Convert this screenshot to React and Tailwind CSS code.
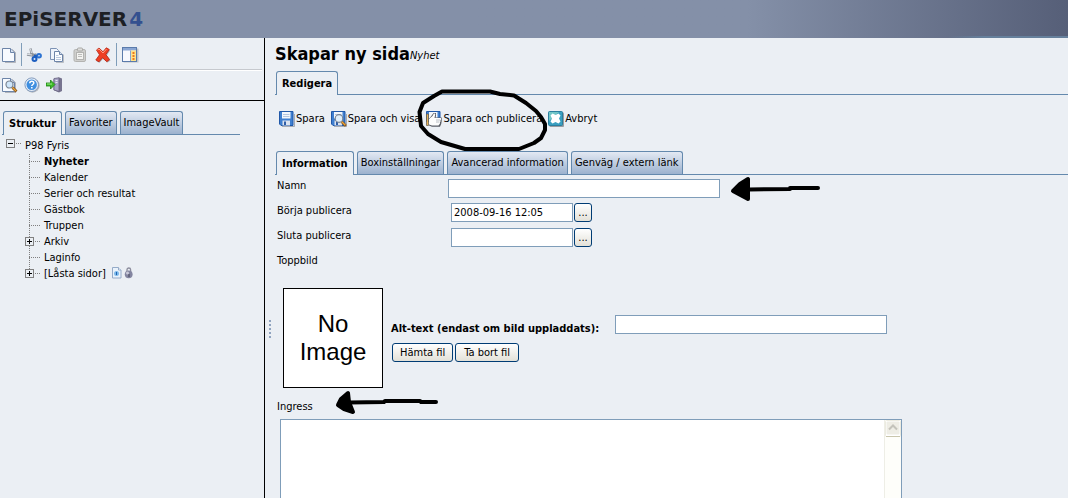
import React from "react";

const Svg = ({ children, w = 16, h = 16, className = "" }) => (
  <svg width={w} height={h} viewBox={`0 0 ${w} ${h}`} aria-hidden="true" className={`block shrink-0 ${className}`}>
    {children}
  </svg>
);

const Page = ({ x = 0, y = 0 }) => (
  <g transform={`translate(${x} ${y})`}>
    <path d="M3 2.5h8.5l3 3v10H4" fill="none" stroke="#9a9da4" strokeOpacity=".7" />
    <path d="M1.5 1.5h8l4 4v9h-12z" fill="#f7faff" stroke="#6c84a8" />
    <path d="M9.5 1.5v4h4" fill="#d5e0f0" stroke="#6c84a8" />
  </g>
);

const NewIcon = () => <Svg><Page /></Svg>;

const CutIcon = () => (
  <Svg>
    <path d="M4.500 1.500l1 5 4.500 3M1 7.500l6 1 3.500-1" stroke="#8e949c" strokeWidth="2.400" fill="none" />
    <path d="M4.500 2l1 4M1 7.200l5 .8" stroke="#e0e3e7" fill="none" />
    <ellipse cx="8.500" cy="12" rx="2" ry="2" fill="#dce8f8" stroke="#1e5fc0" strokeWidth="2" />
    <ellipse cx="13" cy="8.800" rx="1.900" ry="1.700" fill="#dce8f8" stroke="#2d73d2" strokeWidth="2" />
    <path d="M8 8.500l3 1" stroke="#1e5fc0" strokeWidth="2" />
  </Svg>
);

const CopyIcon = () => (
  <Svg>
    <path d="M1.500 1.500h6l2 2v9h-8z" fill="#eef3fb" stroke="#7d93b5" />
    <path d="M7 15.500h7.500v-8" fill="none" stroke="#9a9da4" strokeOpacity=".6" />
    <path d="M5.500 4.500h5l3 3v7h-8z" fill="#fafcff" stroke="#6c84a8" />
    <path d="M10.500 4.500v3h3" fill="#d5e0f0" stroke="#6c84a8" />
    <path d="M7 8.500h2.500M7 10.500h5M7 12.500h5" fill="none" stroke="#b9c7dc" />
  </Svg>
);

const PasteIcon = () => (
  <Svg>
    <rect x="2" y="2.500" width="11.500" height="12" rx="1.500" fill="#cfcfcd" stroke="#b3b3b1" />
    <rect x="5.500" y="1" width="5" height="3" rx="1" fill="#dededc" stroke="#a9a9a7" />
    <rect x="4.500" y="5.500" width="7" height="7" fill="#f3f3f1" stroke="#b3b3b1" />
    <path d="M6 7.500h4M6 9.500h4" stroke="#bdbdbb" />
  </Svg>
);

const DeleteIcon = () => (
  <Svg>
    <path d="M3.500 3.500L8 6l4-4 3 1.500L11.800 8.500l3.700 5-3 2-4.500-3.700-3.500 4-3-1.500L5.500 9z" fill="#77777c" opacity=".6" />
    <path d="M1.500 3L4 1l4 3.800L11.300.8l3 1.700L10.800 7.500l3.700 5-2.700 2.200-4.300-4L4 14.800.8 13l3.700-5.200z" fill="#ee3f24" stroke="#b92312" strokeWidth=".8" />
    <path d="M2.500 3L4 2l4 4 3.500-4" fill="none" stroke="#ff9a80" />
  </Svg>
);

const PanelIcon = () => (
  <Svg w={17}>
    <rect x="1.500" y="1.500" width="15" height="14" fill="#a5a8ad" opacity=".6" />
    <rect x=".5" y=".5" width="14" height="14" fill="#f7f8fd" stroke="#5b7bab" />
    <path d="M1 1h13v2.500H1z" fill="#8aa6d3" />
    <path d="M9 3.500h5V14H9z" fill="#ffe28a" />
    <path d="M8.500 3.500V14" stroke="#8aa5cc" />
    <path d="M10.500 5h2v2h-2zM10.500 8h2v2h-2zM10.500 11h2v2h-2z" fill="#ee7a1c" />
  </Svg>
);

const PreviewIcon = () => (
  <Svg>
    <Page x={-1} />
    <circle cx="7.500" cy="7.500" r="3.500" fill="#cfe6fa" stroke="#7b8593" strokeWidth="1.200" />
    <path d="M10.500 10.500l4 4" stroke="#7a4a14" strokeWidth="2.600" />
    <path d="M10.500 10.500l3.500 3.500" stroke="#e8a33b" strokeWidth="1.400" />
  </Svg>
);

const HelpIcon = () => (
  <Svg>
    <circle cx="8.500" cy="8.500" r="7.200" fill="#8d9096" opacity=".6" />
    <circle cx="7.700" cy="7.700" r="6.800" fill="#e4edf8" stroke="#7b95ba" strokeWidth=".9" />
    <circle cx="7.700" cy="7.700" r="5.200" fill="#3f8fe0" />
    <path d="M5.800 6.300c0-2.700 4-2.600 4-.3 0 1.500-2 1.500-2 3M7.800 10v1.500" fill="none" stroke="#fff" strokeWidth="1.500" />
  </Svg>
);

const LogoutIcon = () => (
  <Svg>
    <path d="M7.500 2l6-1.500 2.500 1V14l-3 1.500L7.500 13z" fill="#77748f" />
    <path d="M8 1.500L13 .8v13.700l-5-1.500z" fill="#a7a3c6" stroke="#67637f" strokeWidth=".8" />
    <path d="M9.500 3.500h2M9.500 5.500h2" stroke="#e8e7f2" />
    <path d="M0 6h4.500V3L9 7.500 4.500 12V9H0z" fill="#3cbc28" stroke="#1d7f14" strokeWidth=".8" />
    <path d="M1 7h5" stroke="#9be789" />
  </Svg>
);

const Floppy = () => (
  <>
    <path d="M3 15.500h12.500V3" fill="none" stroke="#8d9096" strokeOpacity=".7" />
    <path d="M.5 .5h13.500v14H2l-1.500-1.500z" fill="#3f7fd0" stroke="#2158a8" />
    <path d="M3 1h8.500v6.500H3z" fill="#f3f7fc" />
    <path d="M4 3.500h6.500M4 5.500h6.500" stroke="#b5c6df" />
    <path d="M3.500 9.500h7.500v5H3.500z" fill="#dbe3ef" />
    <path d="M5 10.500h2v3.500H5z" fill="#2f5da6" />
  </>
);

const SaveIcon = () => <Svg><Floppy /></Svg>;

const SaveViewIcon = () => (
  <Svg>
    <Floppy />
    <circle cx="8" cy="7.500" r="3.800" fill="#e0effb" stroke="#7b8593" strokeWidth="1.200" />
    <path d="M10.800 10.800l4 4" stroke="#7a4a14" strokeWidth="2.600" />
    <path d="M10.800 10.800l3.500 3.500" stroke="#e8a33b" strokeWidth="1.400" />
  </Svg>
);

const PublishIcon = () => (
  <Svg>
    <path d="M.5 .5h13.500v10H.5z" fill="#3f7fd0" stroke="#2158a8" />
    <path d="M.5 3v11.500h2V3z" fill="#e8b45a" stroke="#5d564a" strokeWidth=".7" />
    <path d="M3 1h8.500v6H3z" fill="#f3f7fc" />
    <path d="M3 14.500V8L7.500 2h2.500v3L9.500 6.500h6.200V10l-.5 3-1.200 2.700H6z" fill="#5b5e66" />
    <path d="M3 13.500V8l3.500-3L8 2.300l1.300.7-.8 4h6.500v1.700l-.5.300v1.700l-.5.300v1.500l-1.500 2H6z" fill="#fdfdfd" />
    <path d="M10 9h4M10 11h3.500" stroke="#a8adb5" strokeWidth=".8" />
  </Svg>
);

const CancelIcon = () => (
  <Svg>
    <rect x="1.500" y="1.500" width="14.500" height="14.500" rx="1" fill="#77797e" opacity=".7" />
    <rect x=".5" y=".5" width="14" height="14" rx="1" fill="#3a9fc0" stroke="#2b7f9f" />
    <path d="M1 1h10L1 10z" fill="#7fd0c8" opacity=".8" />
    <path d="M2.500 4.500l2-2 3 1.500 3-1.500 2 2-1.500 3 1.500 3-2 2-3-1.500-3 1.500-2-2 1.500-3z" fill="#fff" />
  </Svg>
);

const InfoPageIcon = () => (
  <Svg w={10} h={12}>
    <path d="M.5 .5h6l2.500 2.500v8h-8.500z" fill="#e9f2fb" stroke="#95abc8" />
    <path d="M6.500 .5v2.500h2.500" fill="#fff" stroke="#95abc8" />
    <circle cx="4.500" cy="6.500" r="2.500" fill="#7db9ea" />
    <path d="M4.500 5v3" stroke="#1e62b0" />
  </Svg>
);

const LockIcon = () => (
  <Svg w={10} h={12}>
    <path d="M3 5V2.800a1.800 1.800 0 0 1 3.600 0v2" fill="none" stroke="#8b8c9c" strokeWidth="1.300" />
    <circle cx="4.700" cy="7.300" r="3.900" fill="#8385a0" />
    <circle cx="3.500" cy="6" r="1.500" fill="#c9cad8" />
    <path d="M5 7v3" stroke="#44465c" />
  </Svg>
);

const Branch = ({ expandable, last }) => (
  <Svg className="mr-1">
    <path d={last ? "M5.500 0V8" : "M5.500 0V16"} stroke="#808080" strokeDasharray="1 1" />
    <path d="M5 7.500H16" stroke="#808080" strokeDasharray="1 1" />
    {expandable && (
      <>
        <rect x="1.500" y="3.500" width="8" height="8" fill="#ebeff4" stroke="#808080" />
        <path d="M3 7.500h5M5.500 5v5" stroke="#000" />
      </>
    )}
  </Svg>
);

const Tab = ({ label, active }) => (
  <button
    type="button"
    role="tab"
    aria-selected={!!active}
    className={
      active
        ? "-mb-px h-6 rounded-t-[3px] border border-b-0 border-[#6489ad] bg-[#ebeff4] px-[5px] font-bold whitespace-nowrap"
        : "h-[23px] rounded-t-[3px] border border-b-0 border-[#6489ad] bg-linear-to-b from-[#e3e9f3] to-[#9cb2ce] px-[3px] whitespace-nowrap"
    }
  >
    {label}
  </button>
);

const Tabs = ({ items, name, className = "" }) => (
  <div role="tablist" aria-label={name} className={`flex items-end gap-[3px] border-b border-[#6489ad] pl-px ${className}`}>
    {items.map((t, i) => <Tab key={t} label={t} active={i === 0} />)}
  </div>
);

const IconButton = ({ label, children }) => (
  <button type="button" aria-label={label} title={label}>{children}</button>
);

const Action = ({ icon, label }) => (
  <button type="button" className="flex items-center gap-px whitespace-nowrap">
    {icon}
    {label}
  </button>
);

const field = "h-[19px] border border-[#7f9db9] bg-white px-0.5 outline-none";
const xpButton = "h-[19px] rounded-[3px] border border-[#003c74] bg-linear-to-b from-white to-[#e3e1d8] text-center whitespace-nowrap";

const tree = [
  { label: "Nyheter", current: true },
  { label: "Kalender" },
  { label: "Serier och resultat" },
  { label: "Gästbok" },
  { label: "Truppen" },
  { label: "Arkiv", expandable: true },
  { label: "Laginfo" },
  { label: "[Låsta sidor]", expandable: true, locked: true },
];

function Sidebar() {
  return (
    <aside className="w-[265px] shrink-0 border-r border-black">
      <div className="border-b border-black">
        <div className="mr-0.5 flex h-8 items-center border-b border-[#c6c9ce] pt-0.5 pl-px">
          <IconButton label="Ny sida"><NewIcon /></IconButton>
          <span className="mx-1 h-[23px] w-px bg-[#7f9db9]" />
          <div className="flex gap-[7px]">
            <IconButton label="Klipp ut"><CutIcon /></IconButton>
            <IconButton label="Kopiera"><CopyIcon /></IconButton>
            <IconButton label="Klistra in"><PasteIcon /></IconButton>
            <IconButton label="Ta bort"><DeleteIcon /></IconButton>
          </div>
          <span className="mx-[5px] h-[23px] w-px bg-[#7f9db9]" />
          <IconButton label="Visa panel"><PanelIcon /></IconButton>
        </div>
        <div className="mr-0.5 flex h-[30px] items-center gap-1.5 border-t border-white pb-0.5 pl-0.5">
          <IconButton label="Förhandsgranska"><PreviewIcon /></IconButton>
          <IconButton label="Hjälp"><HelpIcon /></IconButton>
          <IconButton label="Logga ut"><LogoutIcon /></IconButton>
        </div>
      </div>
      <Tabs name="Träd" items={["Struktur", "Favoriter", "ImageVault"]} className="mt-2.5 mr-6 ml-0.5" />
      <div className="mt-[3px] pl-[5px]">
        <div className="flex h-4 items-center">
          <Svg w={16} className="mr-1">
            <rect x="1.500" y="1.500" width="8" height="8" fill="none" stroke="#808080" />
            <path d="M3 5.500h5" stroke="#000" />
            <path d="M11 5.500h5" stroke="#808080" strokeDasharray="1 1" />
          </Svg>
          <a href="#p98">P98 Fyris</a>
        </div>
        <ul className="pl-[19px]">
          {tree.map((n, i) => (
            <li key={n.label} className="flex h-4 items-center">
              <Branch expandable={n.expandable} last={i === tree.length - 1} />
              <a href={`#sida-${i}`} className={n.current ? "font-bold" : ""}>{n.label}</a>
              {n.locked && (
                <span className="ml-1.5 flex gap-0.5 pb-0.5">
                  <InfoPageIcon />
                  <LockIcon />
                </span>
              )}
            </li>
          ))}
        </ul>
      </div>
    </aside>
  );
}

function DateRow({ id, label, value }) {
  return (
    <>
      <label htmlFor={id} className="h-[25px]">{label}</label>
      <div className="flex gap-px pl-1">
        <input id={id} type="text" defaultValue={value} className={`w-[122px] ${field}`} />
        <button type="button" aria-label={`Välj datum: ${label}`} className={`w-[18px] ${xpButton}`}>...</button>
      </div>
    </>
  );
}

export default function App() {
  return (
    <div className="flex h-screen flex-col overflow-hidden bg-[#ebeff4] font-['DejaVu_Sans_Condensed','DejaVu_Sans',sans-serif] text-[11px] leading-4 text-black">
      <header className="relative flex h-[38px] shrink-0 items-center gap-0.5 bg-[#8490a8] bg-linear-to-r from-[#8490a8] from-70% to-[#565f78] pl-1 font-['DejaVu_Sans',sans-serif] text-xl leading-5 font-bold text-[#1d1f24]">
        <span>EPiSERVER</span>
        <span className="text-[#34508f]">4</span>
        <span className="absolute right-0 bottom-0 h-0.5 w-[120px] bg-linear-to-r from-transparent to-[#66809c] to-30%" />
      </header>
      <div className="flex min-h-0 grow">
        <Sidebar />
        <div className="flex w-2.5 shrink-0 justify-center pt-[282px]">
          <Svg w={2} h={20}>
            <path d="M1 0v20" stroke="#8fa3bf" strokeWidth="2" strokeDasharray="2 2" />
          </Svg>
        </div>
        <main className="relative min-w-0 grow">
          <h1 className="mb-px flex h-8 items-center text-lg font-bold whitespace-nowrap">
            Skapar ny sida <small className="pt-1 text-[11px] font-normal italic">Nyhet</small>
          </h1>
          <Tabs name="Läge" items={["Redigera"]} />
          <div className="mt-4 flex h-4 gap-1.5 pl-1">
            <Action icon={<SaveIcon />} label="Spara" />
            <Action icon={<SaveViewIcon />} label="Spara och visa" />
            <Action icon={<PublishIcon />} label="Spara och publicera" />
            <Action icon={<CancelIcon />} label="Avbryt" />
          </div>
          <Tabs
            name="Egenskaper"
            className="mt-6"
            items={["Information", "Boxinställningar", "Avancerad information", "Genväg / extern länk"]}
          />
          <form className="pl-0.5" onSubmit={(e) => e.preventDefault()}>
            <div className="grid grid-cols-[170px_1fr] pt-[3px]">
              <label htmlFor="namn" className="h-[25px]">Namn</label>
              <div className="pt-px pl-px">
                <input id="namn" type="text" className={`w-[272px] ${field}`} />
              </div>
              <DateRow id="start" label="Börja publicera" value="2008-09-16 12:05" />
              <DateRow id="stopp" label="Sluta publicera" value="" />
              <span className="h-[25px]">Toppbild</span>
            </div>
            <div className="mt-2.5 flex gap-2 pl-1.5">
              <div className="flex size-[100px] shrink-0 items-center justify-center border border-black bg-white text-center font-['Liberation_Sans',sans-serif] text-2xl leading-7">
                No<br />Image
              </div>
              <div className="pt-[27px]">
                <div className="flex gap-4">
                  <label htmlFor="alt" className="pt-1.5 font-bold whitespace-nowrap">Alt-text (endast om bild uppladdats):</label>
                  <input id="alt" type="text" className={`w-[272px] ${field}`} />
                </div>
                <div className="mt-1.5 flex gap-0.5 pl-px">
                  <button type="button" className={`px-[7px] ${xpButton}`}>Hämta fil</button>
                  <button type="button" className={`px-2 ${xpButton}`}>Ta bort fil</button>
                </div>
              </div>
            </div>
            <label htmlFor="ingress" className="mt-[11px] block">Ingress</label>
            <div className="mt-1 ml-[3px] flex h-[100px] w-[622px] border border-[#7f9db9] bg-white">
              <textarea id="ingress" className="grow resize-none outline-none" />
              <div className="w-[17px] border-l border-[#eeeee6] bg-[#fefefa]">
                <button type="button" aria-label="Rulla uppåt" className="block">
                  <Svg h={17}>
                    <rect x=".5" y=".5" width="15" height="16" rx="1" fill="#fff" stroke="#ecebe0" />
                    <rect x="1.500" y="1.500" width="13" height="13" rx="1" fill="#eeede5" />
                    <path d="M1 16.500h14" stroke="#c9c6ad" />
                    <path d="M4 9.500l4-4 4 4" fill="none" stroke="#c4c3bb" strokeWidth="2" />
                  </Svg>
                </button>
              </div>
            </div>
          </form>
          <svg
            width="600"
            height="400"
            viewBox="275 38 600 400"
            fill="none"
            stroke="#000"
            strokeWidth="4"
            strokeLinejoin="round"
            strokeLinecap="round"
            aria-hidden="true"
            className="pointer-events-none absolute top-0 left-0"
          >
            <path d="M434 96L442 91.500L490 91.500L500 94L514 95.500L526 103L536 111L541 117L545 124L545 130L541 138L534 143L519 149L465 149L441 142L428 134L421 126L419.500 112L423 103L434 96" />
            <path d="M749 189.500L790 189L790 188L818 188" />
            <path d="M733 191L740 184L748 179L748 199Z" fill="#000" />
            <path d="M349 402.500L384 402L385 401L420 401L421 402L436 402" />
            <path d="M338 405L341 399L348 393L349 402L353 412L344 409Z" fill="#000" />
          </svg>
        </main>
      </div>
    </div>
  );
}
